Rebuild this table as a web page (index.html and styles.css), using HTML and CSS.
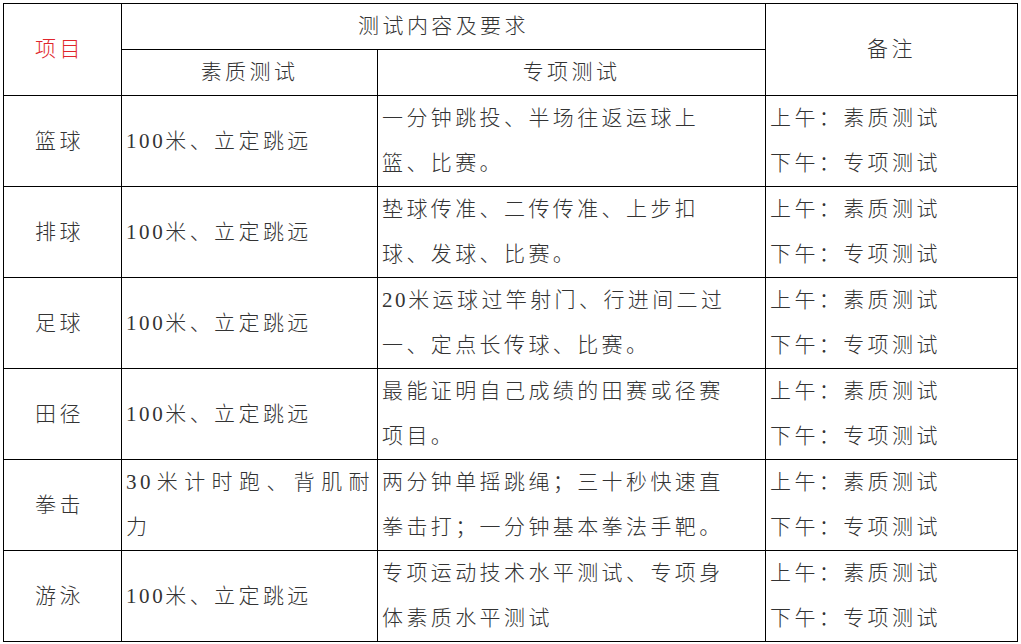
FILE: index.html
```html
<!DOCTYPE html>
<html lang="zh-CN">
<head>
<meta charset="utf-8">
<title>测试内容及要求</title>
<link rel="stylesheet" href="styles.css">
</head>
<body>
<div class="wrap">
<table class="grid">
  <colgroup>
    <col class="c1"><col class="c2"><col class="c3"><col class="c4">
  </colgroup>
  <thead>
    <tr class="h1">
      <th rowspan="2" class="name red">项目</th>
      <th colspan="2">测试内容及要求</th>
      <th rowspan="2">备注</th>
    </tr>
    <tr class="h2">
      <th>素质测试</th>
      <th>专项测试</th>
    </tr>
  </thead>
  <tbody>
    <tr>
      <td class="name">篮球</td>
      <td><span class="num">100</span>米、立定跳远</td>
      <td><div>一分钟跳投、半场往返运球上</div><div>篮、比赛。</div></td>
      <td><div>上午：素质测试</div><div>下午：专项测试</div></td>
    </tr>
    <tr>
      <td class="name">排球</td>
      <td><span class="num">100</span>米、立定跳远</td>
      <td><div>垫球传准、二传传准、上步扣</div><div>球、发球、比赛。</div></td>
      <td><div>上午：素质测试</div><div>下午：专项测试</div></td>
    </tr>
    <tr>
      <td class="name">足球</td>
      <td><span class="num">100</span>米、立定跳远</td>
      <td><div><span class="num">20</span>米运球过竿射门、行进间二过</div><div>一、定点长传球、比赛。</div></td>
      <td><div>上午：素质测试</div><div>下午：专项测试</div></td>
    </tr>
    <tr>
      <td class="name">田径</td>
      <td><span class="num">100</span>米、立定跳远</td>
      <td><div>最能证明自己成绩的田赛或径赛</div><div>项目。</div></td>
      <td><div>上午：素质测试</div><div>下午：专项测试</div></td>
    </tr>
    <tr>
      <td class="name">拳击</td>
      <td><div class="just">30米计时跑、背肌耐</div><div>力</div></td>
      <td><div>两分钟单摇跳绳；三十秒快速直</div><div>拳击打；一分钟基本拳法手靶。</div></td>
      <td><div>上午：素质测试</div><div>下午：专项测试</div></td>
    </tr>
    <tr>
      <td class="name">游泳</td>
      <td><span class="num">100</span>米、立定跳远</td>
      <td><div>专项运动技术水平测试、专项身</div><div>体素质水平测试</div></td>
      <td><div>上午：素质测试</div><div>下午：专项测试</div></td>
    </tr>
  </tbody>
</table>
</div>
</body>
</html>
```

FILE: styles.css
```css
html, body {
  margin: 0;
  padding: 0;
  background: #ffffff;
}
.wrap {
  padding: 3px 0 0 3px;
}
.grid {
  border-collapse: collapse;
  table-layout: fixed;
  width: 1014px;
  font-family: "Liberation Serif", "Noto Sans CJK SC", serif;
  font-size: 21px;
  font-weight: 300;
  letter-spacing: 3.4px;
  color: #333333;
}
.c1 { width: 118px; }
.c2 { width: 256px; }
.c3 { width: 388px; }
.c4 { width: 252px; }
.grid th,
.grid td {
  border: 1px solid #000000;
  padding: 0 4px;
  vertical-align: middle;
  line-height: 45px;
  font-weight: 300;
  text-align: left;
  white-space: nowrap;
  overflow: hidden;
}
.grid th {
  text-align: center;
}
.h1 { height: 45px; }
.h2 { height: 46px; }
.grid tbody tr { height: 91px; }
.grid .name {
  text-align: center;
  padding: 0 8px 0 2px;
}
.red {
  color: #e0262c;
}
.num {
  letter-spacing: 2.6px;
}
.just {
  text-align: justify;
  text-align-last: justify;
}
```
